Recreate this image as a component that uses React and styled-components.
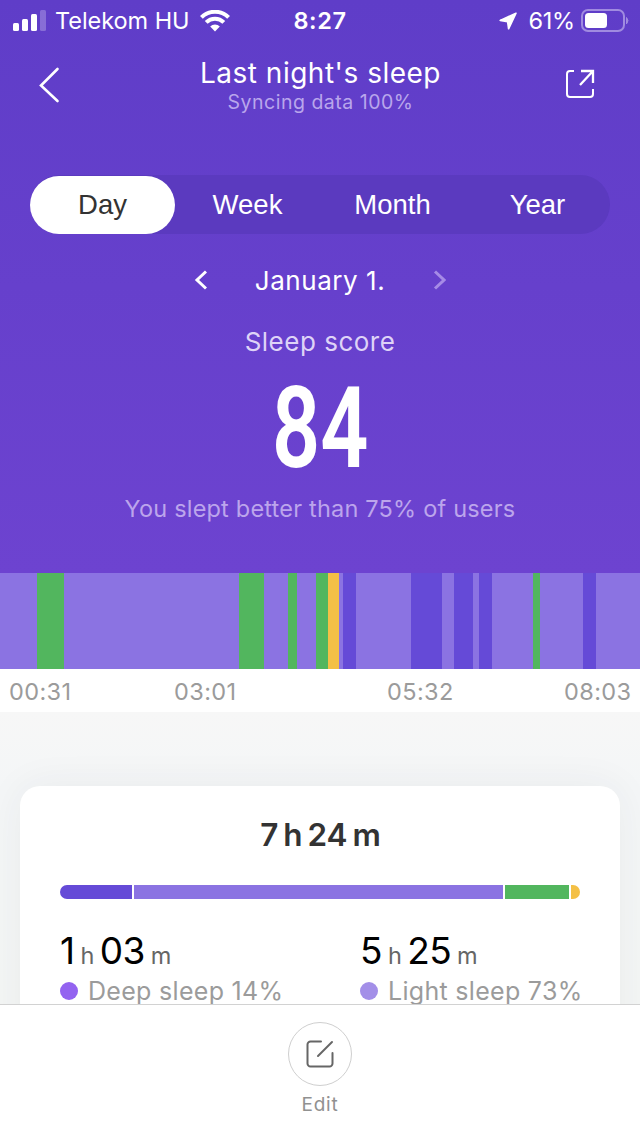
import React, { useState } from 'react';
import styled, { createGlobalStyle, ThemeProvider } from 'styled-components';

const theme = {
    deep: '#654ad7',
    light: '#8b73e2',
    rem: '#52b65e',
    awake: '#f4c046',
    gray: '#9b9b9b',
}

//style
const GlobalStyle = createGlobalStyle`
    * {
        box-sizing: border-box;
    }

    body {
        margin: 0;
        font-family: Inter, 'Liberation Sans', sans-serif;
        -webkit-font-smoothing: antialiased;
    }

    button {
        border: none;
        background: none;
        padding: 0;
        font: inherit;
        color: inherit;
    }

    svg {
        display: block;
        flex: none;
    }
`

const Screen = styled.div`
    width: 640px;
    height: 1136px;
    display: flex;
    flex-direction: column;
    overflow: hidden;
    background: #f7f7f7;
`

const Hero = styled.header`
    flex: none;
    height: 573px;
    display: flex;
    flex-direction: column;
    color: #fff;
    background: linear-gradient(#5f3dc8, #6d43d0);
`

const StatusBar = styled.div`
    display: grid;
    grid-template-columns: 1fr auto 1fr;
    height: 42px;
    padding: 0 11px 0 13px;
    font-size: 23.5px;
    line-height: 42px;
`

const StatusSide = styled.div`
    display: flex;
    align-items: center;
    justify-content: ${pr => pr.$end ? 'flex-end' : 'flex-start'};
`

const Carrier = styled.span`
    margin: 0 10px 0 9px;
    letter-spacing: -.05px;
`

const Clock = styled.span`
    margin-right: 2px;
    font-weight: 600;
    letter-spacing: .6px;
`

const Percent = styled.span`
    margin: 0 6px 0 11px;
    letter-spacing: -.2px;
`

const NavBar = styled.div`
    display: grid;
    grid-template-columns: 100px 1fr 100px;
    align-items: center;
    height: 85px;
`

const NavButton = styled.button`
    display: flex;
    justify-content: ${pr => pr.$end ? 'flex-end' : 'flex-start'};
    padding: ${pr => pr.$end ? '0 45px 2px 0' : '0 0 0 38px'};
`

const Heading = styled.div`
    padding: 4px 0 0 1px;
    text-align: center;

    h1 {
        margin: 0;
        font-size: 28px;
        font-weight: 400;
        line-height: 32px;
        letter-spacing: .5px;
    }

    p {
        margin: 0;
        font-size: 19.5px;
        line-height: 27px;
        letter-spacing: .5px;
        color: #b9a6ec;
    }
`

const Tabs = styled.div`
    display: flex;
    flex: none;
    width: 580px;
    height: 59px;
    margin: 48px auto 0;
    padding-top: 1px;
    border-radius: 30px;
    background: #5b3abf;
`

const Tab = styled.button`
    flex: 1;
    height: 58px;
    border-radius: 29px;
    font-family: 'Liberation Sans', Arial, sans-serif;
    font-size: 27.5px;
    color: ${pr => pr.$active ? '#333' : '#fff'};
    background: ${pr => pr.$active ? '#fff' : 'transparent'};
`

const DateRow = styled.div`
    display: flex;
    align-items: center;
    justify-content: space-between;
    width: 252px;
    height: 40px;
    margin: 26px auto 0;
    font-size: 26px;
    letter-spacing: .55px;
`

const Score = styled.div`
    display: flex;
    flex-direction: column;
    align-items: center;
    padding-top: 22px;
`

const ScoreLabel = styled.div`
    font-size: 26px;
    line-height: 40px;
    letter-spacing: .5px;
    color: #ded3f7;
`

const ScoreValue = styled.div`
    padding-top: 1px;
    font-family: Roboto, sans-serif;
    font-size: 114px;
    font-weight: 600;
    line-height: 130px;
    transform: scaleX(.74);
`

const ScoreNote = styled.div`
    font-size: 23.5px;
    line-height: 31px;
    letter-spacing: .2px;
    color: #bca5ec;
`

const Timeline = styled.div`
    display: flex;
    flex: none;
    height: 96px;
`

const Stage = styled.div`
    flex: ${pr => pr.$span} 0 0;
    background: ${pr => pr.theme[pr.$type]};
`

const Axis = styled.div`
    display: grid;
    flex: none;
    grid-template-columns: 165px 213px 177px 1fr;
    height: 43px;
    padding-left: 9px;
    font-size: 23.5px;
    line-height: 46px;
    letter-spacing: .4px;
    color: ${pr => pr.theme.gray};
    background: #fff;
`

const Content = styled.main`
    flex: 1;
    min-height: 0;
    overflow: hidden;
    padding: 74px 20px 0;
    background: linear-gradient(#f7f7f7, #f4f6f7 25%, #f4f6f5);
`

const Card = styled.section`
    height: 400px;
    padding: 28px 40px;
    border-radius: 20px;
    background: #fff;
    box-shadow: 0 0 40px rgba(50, 55, 75, .06);
`

const Total = styled.h2`
    margin: 0;
    padding-left: 1px;
    font-size: 31.5px;
    font-weight: 600;
    line-height: 42px;
    word-spacing: -3px;
    text-align: center;
    color: #333;
`

const SummaryBar = styled.div`
    display: flex;
    gap: 2px;
    height: 14px;
    margin-top: 29px;
    border-radius: 7px;
    overflow: hidden;
`

const Stats = styled.div`
    display: grid;
    grid-template-columns: 300px 1fr;
    margin-top: 31px;
`

const Duration = styled.div`
    display: flex;
    align-items: baseline;
    height: 42px;
    font-size: 37px;
    line-height: 42px;
    letter-spacing: -.6px;
    white-space: nowrap;
    color: #000;

    small {
        margin: 0 6px;
        font-size: 23.5px;
        line-height: 30px;
        color: #666;
    }
`

const Legend = styled.div`
    display: flex;
    align-items: center;
    height: 38px;
    font-size: 25px;
    line-height: 38px;
    letter-spacing: .3px;
    white-space: nowrap;
    color: ${pr => pr.theme.gray};
`

const Dot = styled.i`
    width: 18px;
    height: 18px;
    margin-right: 10px;
    border-radius: 50%;
    background: ${pr => pr.$color};
`

const Footer = styled.footer`
    display: flex;
    flex: none;
    flex-direction: column;
    align-items: center;
    height: 132px;
    padding-top: 17px;
    border-top: 1px solid #d2d2d2;
    background: #fff;
`

const EditButton = styled.button`
    display: grid;
    place-items: center;
    width: 64px;
    height: 64px;
    border: 1px solid #cfcfcf;
    border-radius: 50%;
`

const EditLabel = styled.span`
    margin-top: 4px;
    font-size: 19px;
    line-height: 30px;
    letter-spacing: .8px;
    color: #919191;
`
//end style

const tabs = ['Day', 'Week', 'Month', 'Year']

const stages = [
    ['light', 37], ['rem', 27], ['light', 175], ['rem', 25], ['light', 24],
    ['rem', 9], ['light', 19], ['rem', 12], ['awake', 11], ['light', 4],
    ['deep', 13], ['light', 55], ['deep', 31], ['light', 12], ['deep', 19],
    ['light', 6], ['deep', 13], ['light', 41], ['rem', 7], ['light', 43],
    ['deep', 13], ['light', 44],
]

const summary = [['deep', 72], ['light', 369], ['rem', 64], ['awake', 9]]

const stats = [
    { hours: '1', minutes: '03', label: 'Deep sleep 14%', color: '#9363f0' },
    { hours: '5', minutes: '25', label: 'Light sleep 73%', color: '#a38fe8' },
]

const SignalIcon = () => (
    <svg width="33" height="22" viewBox="0 0 33 22" fill="#fff">
        <rect x="0" y="13" width="6" height="8" rx="1.5" />
        <rect x="9" y="9" width="6" height="12" rx="1.5" />
        <rect x="18" y="4" width="6" height="17" rx="1.5" />
        <rect x="27" y="0" width="6" height="21" rx="1.5" opacity=".25" />
    </svg>
)

const WifiIcon = () => (
    <svg width="30" height="22" viewBox="0 0 30 22" fill="none" stroke="#fff" strokeWidth="4">
        <path d="M1.4 7.4a19.2 19.2 0 0 1 27.2 0" />
        <path d="M6.2 12.4a12.4 12.4 0 0 1 17.6 0" />
        <path d="M15 21.5l-4.8-4.9a6.8 6.8 0 0 1 9.6 0z" fill="#fff" stroke="none" />
    </svg>
)

const LocationIcon = () => (
    <svg width="18" height="18" viewBox="0 0 18 18" fill="#fff" stroke="#fff" strokeWidth="1.6" strokeLinejoin="round">
        <path d="M17 1.2 1.2 8.4 8.6 9.6 9.6 16.8z" />
    </svg>
)

const BatteryIcon = () => (
    <svg width="48" height="24" viewBox="0 0 48 24" fill="none">
        <rect x="1" y="1" width="42" height="21" rx="6" stroke="#a08be0" strokeWidth="2" />
        <rect x="4" y="4" width="22" height="15" rx="3.5" fill="#fff" />
        <path d="M45.5 8.5q3 3 0 6.5z" fill="#a08be0" stroke="#a08be0" />
    </svg>
)

const BackIcon = () => (
    <svg width="22" height="36" viewBox="0 0 22 36" fill="none" stroke="#fff" strokeWidth="2.6" strokeLinecap="round">
        <path d="M19.5 2 3 18.5 19.5 34" />
    </svg>
)

const ShareIcon = () => (
    <svg width="30" height="30" viewBox="0 0 30 30" fill="none" stroke="#fff" strokeWidth="2">
        <path d="M9 2H5a3 3 0 0 0-3 3v20a3 3 0 0 0 3 3h20a3 3 0 0 0 3-3v-5" />
        <path d="M16 2h12v12M28 2 15 16" strokeWidth="2.3" />
    </svg>
)

const Chevron = ({ right, color }) => (
    <svg width="13" height="20" viewBox="0 0 13 20" fill="none" stroke={color} strokeWidth="3">
        <path d={right ? 'M2 1.5 11 10 2 18.5' : 'M12 1.5 3 10 12 18.5'} />
    </svg>
)

const EditIcon = () => (
    <svg width="28" height="28" viewBox="0 0 28 28" fill="none" stroke="#666" strokeWidth="2" strokeLinecap="round">
        <path d="M15 1.5H4.5a3 3 0 0 0-3 3v19a3 3 0 0 0 3 3h19a3 3 0 0 0 3-3V13" />
        <path d="M26 2 12 16" />
    </svg>
)

export default function App() {
    const [active, setActive] = useState('Day')

    return (
        <ThemeProvider theme={theme}>
            <GlobalStyle />
            <Screen>
                <Hero>
                    <StatusBar>
                        <StatusSide>
                            <SignalIcon />
                            <Carrier>Telekom HU</Carrier>
                            <WifiIcon />
                        </StatusSide>
                        <Clock>8:27</Clock>
                        <StatusSide $end>
                            <LocationIcon />
                            <Percent>61%</Percent>
                            <BatteryIcon />
                        </StatusSide>
                    </StatusBar>

                    <NavBar>
                        <NavButton aria-label="Back"><BackIcon /></NavButton>
                        <Heading>
                            <h1>Last night's sleep</h1>
                            <p>Syncing data 100%</p>
                        </Heading>
                        <NavButton $end aria-label="Share"><ShareIcon /></NavButton>
                    </NavBar>

                    <Tabs>
                        {tabs.map(tab => (
                            <Tab key={tab} $active={tab === active} onClick={() => setActive(tab)}>{tab}</Tab>
                        ))}
                    </Tabs>

                    <DateRow>
                        <Chevron color="#fff" />
                        <span>January 1.</span>
                        <Chevron right color="#a68be6" />
                    </DateRow>

                    <Score>
                        <ScoreLabel>Sleep score</ScoreLabel>
                        <ScoreValue>84</ScoreValue>
                        <ScoreNote>You slept better than 75% of users</ScoreNote>
                    </Score>
                </Hero>

                <Timeline>
                    {stages.map(([type, span], i) => <Stage key={i} $type={type} $span={span} />)}
                </Timeline>
                <Axis>
                    <span>00:31</span>
                    <span>03:01</span>
                    <span>05:32</span>
                    <span>08:03</span>
                </Axis>

                <Content>
                    <Card>
                        <Total>7 h 24 m</Total>
                        <SummaryBar>
                            {summary.map(([type, span]) => <Stage key={type} $type={type} $span={span} />)}
                        </SummaryBar>
                        <Stats>
                            {stats.map(stat => (
                                <div key={stat.label}>
                                    <Duration>
                                        {stat.hours}<small>h</small>{stat.minutes}<small>m</small>
                                    </Duration>
                                    <Legend><Dot $color={stat.color} />{stat.label}</Legend>
                                </div>
                            ))}
                        </Stats>
                    </Card>
                </Content>

                <Footer>
                    <EditButton aria-label="Edit"><EditIcon /></EditButton>
                    <EditLabel>Edit</EditLabel>
                </Footer>
            </Screen>
        </ThemeProvider>
    )
}
